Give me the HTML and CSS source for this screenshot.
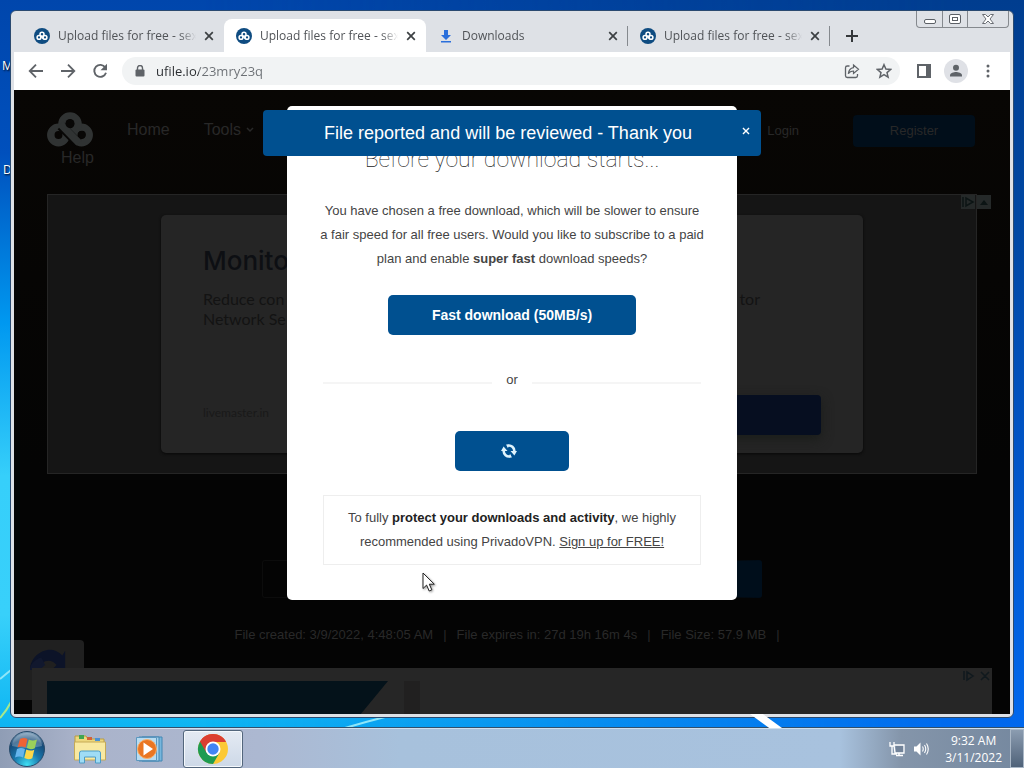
FILE: index.html
```html
<!DOCTYPE html>
<html lang="en">
<head>
<meta charset="utf-8">
<title>Upload files for free</title>
<link rel="stylesheet" href="styles.css">
</head>
<body>
<svg class="defs" aria-hidden="true">
  <symbol id="knot" viewBox="0 0 46 36">
    <g fill="none" stroke="currentColor" stroke-width="7.500">
      <circle cx="11.500" cy="23" r="7.700"/>
      <circle cx="34.500" cy="23" r="7.700"/>
      <circle cx="23" cy="12" r="8"/>
    </g>
    <path d="M14 14l17 17" stroke="#080706" stroke-width="9.500"/>
    <path d="M13.500 12l18.500 19" stroke="currentColor" stroke-width="7.500"/>
    <circle cx="23" cy="11.500" r="4.500" fill="#080706"/>
    <circle cx="35" cy="22.500" r="3.800" fill="#080706"/>
  </symbol>
  <symbol id="fav" viewBox="0 0 16 16">
    <circle cx="8" cy="8" r="8" fill="#0f4c81"/>
    <g fill="none" stroke="#fff" stroke-width="1.500">
      <circle cx="5" cy="9.400" r="1.900"/><circle cx="11" cy="9.400" r="1.900"/><circle cx="8" cy="6.200" r="2"/>
      <path d="M6.500 7.800l3 3"/>
    </g>
  </symbol>
  <symbol id="close" viewBox="0 0 10 10"><path d="M1.200 1.200l7.600 7.600M8.800 1.200L1.200 8.800" stroke="currentColor" stroke-width="1.700" fill="none"/></symbol>
</svg>
<div class="desktop">
  <svg class="streaks" viewBox="0 0 1024 768" preserveAspectRatio="none"><path d="M0 679q6-5 11-9M345 728q20-6 40-11" fill="none" stroke="#8fe6f8" stroke-width="2"/><path d="M0 718q7-8 11-16" fill="none" stroke="#a6e88c" stroke-width="2"/></svg>
  <span class="desk-label label-m">M</span>
  <span class="desk-label label-d">D</span>
  <div class="workspace">
    <section class="window">
      <div class="tabstrip">
        <div class="tab"><svg class="favicon"><use href="#fav"/></svg><button class="tab-title">Upload files for free - sex...</button><button class="tab-close" aria-label="Close tab"><svg><use href="#close"/></svg></button></div>
        <div class="tab active"><svg class="favicon"><use href="#fav"/></svg><button class="tab-title">Upload files for free - sex...</button><button class="tab-close" aria-label="Close tab"><svg><use href="#close"/></svg></button></div>
        <div class="tab divided"><svg class="favicon" viewBox="0 0 16 16"><path d="M6 2h4v5h3L8 12 3 7h3zM3 13h10v1.500H3z" fill="#2a6fdb"/></svg><button class="tab-title">Downloads</button><button class="tab-close" aria-label="Close tab"><svg><use href="#close"/></svg></button></div>
        <div class="tab divided"><svg class="favicon"><use href="#fav"/></svg><button class="tab-title">Upload files for free - sex...</button><button class="tab-close" aria-label="Close tab"><svg><use href="#close"/></svg></button></div>
        <button class="new-tab" aria-label="New tab"><svg viewBox="0 0 12 12"><path d="M6 0v12M0 6h12" stroke="#35383b" stroke-width="2"/></svg></button>
      </div>
      <div class="window-controls">
        <button aria-label="Minimize"><svg viewBox="0 0 12 12"><rect x=".5" y="6.500" width="11" height="4" rx="1.500" fill="#fff" stroke="#5c6066"/></svg></button>
        <button aria-label="Restore"><svg viewBox="0 0 12 12"><rect x=".5" y="1.500" width="11" height="9" rx="1.500" fill="#fff" stroke="#5c6066"/><rect x="3.500" y="4.500" width="5" height="3" fill="none" stroke="#5c6066"/></svg></button>
        <button class="wide" aria-label="Close"><svg viewBox="0 0 12 12"><path d="M.5 1.500h3L6 4l2.500-2.500h3L8 6l3.500 4.500h-3L6 8l-2.500 2.500h-3L4 6z" fill="#fff" stroke="#6a6e74"/></svg></button>
      </div>
      <div class="toolbar">
        <button class="tool" aria-label="Back"><svg viewBox="0 0 16 16"><path d="M15 8H2M8 1.700L1.700 8 8 14.300" fill="none" stroke="#5f6368" stroke-width="1.800"/></svg></button>
        <button class="tool" aria-label="Forward"><svg viewBox="0 0 16 16"><path d="M1 8h13M8 1.700L14.300 8 8 14.300" fill="none" stroke="#5f6368" stroke-width="1.800"/></svg></button>
        <button class="tool" aria-label="Reload"><svg viewBox="0 0 16 16"><path d="M13.300 4.500A6 6 0 1 0 14 9.800" fill="none" stroke="#5f6368" stroke-width="1.900"/><path d="M15 .8v6.500H8.500z" fill="#5f6368"/></svg></button>
        <div class="omnibox">
          <svg class="lock" viewBox="0 0 10 12"><path d="M2.500 5V3a2.500 2.500 0 0 1 5 0v2" fill="none" stroke="#5f6368" stroke-width="1.400"/><rect x="0.500" y="4.500" width="9" height="7" rx="1" fill="#5f6368"/></svg>
          <input class="url" type="text" aria-label="Address" value="ufile.io/23mry23q">
          <button class="tool" aria-label="Share"><svg viewBox="0 0 16 16"><path d="M5.500 3H3.300A1.800 1.800 0 0 0 1.500 4.800v7.900a1.800 1.800 0 0 0 1.800 1.800h8.400a1.800 1.800 0 0 0 1.800-1.800V11" fill="none" stroke="#5f6368" stroke-width="1.300"/><path d="M9.500 2l5 4.300-5 4.200V8C7 8 5.500 8.800 4.300 10.800 4.700 7.500 6.300 5 9.500 4.600z" fill="none" stroke="#5f6368" stroke-width="1.200"/></svg></button>
          <button class="tool" aria-label="Bookmark"><svg viewBox="0 0 16 16"><path d="M8 1.700l1.900 4.400 4.700.4-3.600 3.100 1.100 4.600L8 11.700l-4.100 2.500L5 9.600 1.400 6.500l4.700-.4z" fill="none" stroke="#5f6368" stroke-width="1.500"/></svg></button>
        </div>
        <button class="tool" aria-label="Side panel"><svg viewBox="0 0 16 16"><path d="M1 1h14v14H1zM3 3v10h7V3z" fill="#5f6368" fill-rule="evenodd"/></svg></button>
        <button class="tool avatar" aria-label="Profile"><svg viewBox="0 0 16 16"><circle cx="8" cy="4.800" r="3" fill="#5f6368"/><path d="M2 13.500v-1.300C2 10 6 9 8 9s6 1 6 3.200v1.300z" fill="#5f6368"/></svg></button>
        <button class="tool" aria-label="Menu"><svg viewBox="0 0 16 16"><g fill="#5f6368"><circle cx="8" cy="3" r="1.500"/><circle cx="8" cy="8" r="1.500"/><circle cx="8" cy="13" r="1.500"/></g></svg></button>
      </div>
      <main class="page">
        <header class="site-header">
          <nav class="site-nav">
            <svg class="logo"><use href="#knot"/></svg>
            <a href="#">Home</a>
            <a href="#">Tools <svg class="caret" viewBox="0 0 8 6"><path d="M1 1l3 3 3-3" fill="none" stroke="currentColor" stroke-width="1.500"/></svg></a>
            <a href="#">Help</a>
          </nav>
          <div class="account"><a class="login" href="#">Login</a><a class="register" href="#">Register</a></div>
        </header>
        <aside class="ad">
          <div class="ad-marks"><svg viewBox="0 0 14 14"><path d="M2 2v10M5 3v8l7-4z" fill="none" stroke="#0c1414" stroke-width="1.500"/></svg><svg viewBox="0 0 14 14"><path d="M3 10l4-5 4 5z" fill="#0c1414"/></svg></div>
          <div class="ad-card">
            <h2>Monito</h2>
            <div class="ad-copy"><p>Reduce con<br>Network Se</p><p>tor</p></div>
            <div class="ad-foot"><small>livemaster.in</small><span class="ad-cta"></span></div>
          </div>
        </aside>
        <div class="file-row"><span></span></div>
        <ul class="meta"><li>File created: 3/9/2022, 4:48:05 AM</li><li>File expires in: 27d 19h 16m 4s</li><li>File Size: 57.9 MB</li><li></li></ul>
        <div class="badge"><svg viewBox="0 0 40 40"><path d="M0 25C0 8 22-4 34 10l3-5v20H23l5-5C22 12 11 15 10 25z" fill="#0c1328"/><path d="M0 25h10l6-5-4-8C5 14 0 19 0 25z" fill="#11182e"/></svg></div>
        <aside class="bottom-ad">
          <svg class="slant" viewBox="0 0 343 34" preserveAspectRatio="none"><path d="M0 0h341L313 34H0z" fill="#04121a"/></svg>
          <span class="smudge"></span>
          <svg class="choices" viewBox="0 0 30 14"><path d="M2 2v9M5 3v8l6-4zM19 3l8 8M27 3l-8 8" fill="none" stroke="#10191e" stroke-width="1.500"/></svg>
        </aside>
        <section class="modal" role="dialog" aria-labelledby="modal-title">
          <h1 id="modal-title">Before your download starts...</h1>
          <p class="intro">You have chosen a free download, which will be slower to ensure<br>a fair speed for all free users. Would you like to subscribe to a paid<br>plan and enable <b>super fast</b> download speeds?</p>
          <button class="primary fast">Fast download (50MB/s)</button>
          <div class="or"><span>or</span></div>
          <button class="primary slow" aria-label="Loading"><svg viewBox="0 0 16 16"><g fill="none" stroke="#dff3fc" stroke-width="2.600"><path d="M6.500 2.700A5.500 5.500 0 0 1 13.300 8.500"/><path d="M9.500 13.300A5.500 5.500 0 0 1 2.700 7.500"/></g><path d="M9.500 8h6.500l-2.600 4.500zM6.500 8H0l2.600-4.500zM5 1.500l3 .2-1 3.500zM11 14.500l-3-.2 1-3.500z" fill="#dff3fc"/></svg></button>
          <p class="vpn">To fully <b>protect your downloads and activity</b>, we highly recommended using PrivadoVPN. <a href="#">Sign up for FREE!</a></p>
        </section>
        <div class="toast" role="alert"><p>File reported and will be reviewed - Thank you</p><button aria-label="Dismiss"><svg><use href="#close"/></svg></button></div>
      </main>
    </section>
  </div>
  <footer class="taskbar">
    <button class="task start" aria-label="Start"><svg viewBox="0 0 38 38"><defs><radialGradient id="orb" cx=".5" cy=".95" r=".95"><stop offset="0" stop-color="#3fe0f4"/><stop offset=".4" stop-color="#1978ad"/><stop offset=".75" stop-color="#164a78"/><stop offset="1" stop-color="#8ba9c2"/></radialGradient></defs><circle cx="19" cy="19" r="17.500" fill="url(#orb)" stroke="#274b6b"/><path d="M4 16a15 13 0 0 1 30 0Q19 20 4 16" fill="#fff" opacity=".25"/><path d="M12 9q4-2 7.500 0l-2 8.500q-4-2-8 0z" fill="#ee6335"/><path d="M20.800 9.500q4 2 8.200 0l-2.200 8.700q-4 2-8-.2z" fill="#9bd05a"/><path d="M9 19q4-2 8 0l-2 8.500q-3.500-2-8 0z" fill="#65b5ed"/><path d="M18.300 19.500q4 2 8 .2l-2 8.500q-4 2-8-.2z" fill="#fbd74a"/></svg></button>
    <button class="task" aria-label="Explorer"><svg viewBox="0 0 34 32"><path d="M2 3h11l2 3h16v20H2z" fill="#edd77d" stroke="#b99c43"/><path d="M6 2h5v4H6z" fill="#40a552"/><path d="M14 4h5v3h-5z" fill="#d36138"/><path d="M22 5h5v3h-5z" fill="#4a91d4"/><path d="M1.500 9h31v18h-31z" fill="#f8e9a1" stroke="#c5aa56"/><path d="M6.500 30V20q0-2 2-2h17q2 0 2 2v10h-5v-6h-11v6z" fill="#9fdcf5" stroke="#4c9cc6"/></svg></button>
    <button class="task" aria-label="Media player"><svg viewBox="0 0 34 32"><path d="M9 4h20v24H9z" fill="#77b6dc" stroke="#4387b4"/><path d="M6 4h20v24H6z" fill="#a7d3ec" stroke="#4387b4"/><path d="M3.500 4.500h20v23h-20z" fill="#b8dcf1" stroke="#5b97bf"/><circle cx="14" cy="16" r="9.500" fill="#ea7622" stroke="#f7b16e"/><path d="M10.500 9.500v13l9.500-6.500z" fill="#fff"/></svg></button>
    <button class="task running" aria-label="Chrome"><svg viewBox="0 0 32 32"><circle cx="16" cy="16" r="15" fill="#fcc934"/><path d="M16 16L3 8.500A15 15 0 0 1 29 8.500H16z" fill="#db3e31"/><path d="M3 8.500A15 15 0 0 0 16 31l6.500-11.300L16 16z" fill="#1e9b51"/><path d="M3 8.500l6.500 11.200L16 9h13A15 15 0 0 0 3 8.500" fill="#db3e31"/><circle cx="16" cy="16" r="7.500" fill="#fff"/><circle cx="16" cy="16" r="5.700" fill="#4285f4"/></svg></button>
    <div class="tray">
      <svg viewBox="0 0 16 16"><path d="M1 1v4h4V1M3 5v8h5M5 4h10v8H6z" fill="none" stroke="#fff" stroke-width="1.300"/><path d="M7 5h7v6H7z" fill="#728399"/><path d="M10 12v2M7 14.500h7" stroke="#fff" stroke-width="1.500"/></svg>
      <svg viewBox="0 0 16 16"><path d="M1 5.500h2.500L7.500 1.500v13l-4-4H1z" fill="#fff"/><path d="M9.500 5.500q1.500 2.500 0 5M11.500 4q2.500 4 0 8M13.500 2.500q3.500 5.500 0 11" fill="none" stroke="#fff" stroke-width="1.100"/></svg>
      <time class="clock">9:32 AM<br>3/11/2022</time>
      <button class="show-desktop" aria-label="Show desktop"></button>
    </div>
  </footer>
  <svg class="cursor" viewBox="0 0 14 20"><path d="M1 1v15.500l3.600-3.400 2.600 5.900 2.600-1.200-2.500-5.600h5z" fill="#fff" stroke="#222"/></svg>
</div>
</body>
</html>
```

FILE: styles.css
```css
* { box-sizing: border-box; }
body { margin: 0; font-family: "Liberation Sans", Arial, sans-serif; font-size: 13px; }
button, input { font: inherit; color: inherit; border: 0; padding: 0; margin: 0; background: none; }
p, h1, h2, ul { margin: 0; padding: 0; }
svg { display: block; flex: none; }
.defs { position: absolute; width: 0; height: 0; }

.desktop {
  position: relative; display: flex; flex-direction: column; height: 100vh; overflow: hidden;
  background: linear-gradient(#0046ac 0%, #0050bd 20%, #0098f0 42%, #36cffa 62%, #38d0fa 80%, #0cb4f2 95%);
}
.desktop::before {
  content: ""; position: absolute; inset: 0;
  background: linear-gradient(#003d8f 0%, #0048a4 30%, #0055c8 60%, #0068ee 95%);
  mask-image: linear-gradient(to right, transparent 20%, #000 95%);
}
.desktop::after {
  content: ""; position: absolute; left: 750px; bottom: 40px; width: 32px; height: 14px;
  background: #fff; clip-path: polygon(0 0, 40% 0, 100% 100%, 60% 100%);
}
.streaks { position: absolute; inset: 0; width: 100%; height: 100%; }
.desk-label { position: absolute; color: #fff; font: 12px/16px "Open Sans", sans-serif; text-shadow: 1px 1px 2px #000; }
.label-m { left: 2px; top: 58px; }
.label-d { left: 3px; top: 162px; }

.workspace { position: relative; flex: 1; min-height: 0; display: flex; padding: 10px; }
.window {
  position: relative; flex: 1; min-width: 0; display: flex; flex-direction: column;
  border: 1px solid #2a4a70; border-radius: 6px; background: #dee1e6; padding: 0 3px 3px;
}
.tabstrip { display: flex; align-items: stretch; height: 41px; padding: 8px 100px 0 8px; font: 12px/16px "Open Sans", sans-serif; color: #505357; }
.tab { position: relative; flex: 0 1 202px; min-width: 0; display: flex; align-items: center; gap: 8px; padding: 0 10px 0 12px; border-radius: 8px 8px 0 0; }
.tab.active { background: #fff; }
.tab.divided::after { content: ""; position: absolute; right: 0; top: 7px; height: 20px; width: 1px; background: #85898e; }
.favicon { width: 16px; height: 16px; }
.tab-title { flex: 1; min-width: 0; overflow: hidden; white-space: nowrap; text-align: left; mask-image: linear-gradient(to right, #000 88%, transparent); }
.tab-close { color: #3c4043; }
.tab-close svg { width: 10px; height: 10px; }
.new-tab { padding: 0 16px; }
.new-tab svg { width: 12px; height: 12px; }
.window-controls { position: absolute; right: 4px; top: 0; display: flex; border: 1px solid #85898e; border-top: 0; border-radius: 0 0 4px 4px; }
.window-controls button { display: grid; place-items: center; width: 25px; height: 16px; }
.window-controls button + button { border-left: 1px solid #85898e; }
.window-controls .wide { width: 41px; }
.window-controls svg { width: 12px; height: 12px; }

.toolbar { display: flex; align-items: center; gap: 8px; height: 38px; padding: 0 10px; background: #fff; }
.tool { display: grid; place-items: center; width: 24px; height: 24px; }
.tool svg { width: 16px; height: 16px; }
.omnibox { flex: 1; min-width: 0; display: flex; align-items: center; gap: 8px; height: 28px; margin: 0 4px 0 2px; padding: 0 4px 0 12px; border-radius: 14px; background: #f1f3f4; }
.lock { width: 12px; height: 12px; }
.url {
  flex: 1; min-width: 0; padding-left: 2px; font: 13px/20px "Open Sans", sans-serif; color: transparent;
  background: linear-gradient(to right, #292c30 45px, #6b6f74 45px); background-clip: text;
}
.avatar { border-radius: 50%; background: #dfe1e6; }

.page { position: relative; flex: 1; min-height: 0; display: flex; flex-direction: column; overflow: hidden; background: linear-gradient(#080604, #040404 60%); }
.site-header { display: flex; justify-content: space-between; align-items: flex-start; padding: 22px 33px 26px; color: #282828; }
.site-header a { color: inherit; text-decoration: none; }
.site-nav { display: flex; flex-wrap: wrap; align-items: center; column-gap: 6px; width: 230px; font-size: 16px; line-height: 20px; }
.site-nav a { display: flex; align-items: center; gap: 5px; padding: 0 14px; }
.logo { width: 46px; height: 36px; margin-right: 14px; color: #303333; }
.caret { width: 8px; height: 6px; }
.account { display: flex; align-items: center; gap: 54px; padding: 3px 2px 0 0; line-height: 32px; }
.register { width: 122px; text-align: center; background: #010e1a; border-radius: 4px; }

.ad { position: relative; margin: 0 33px; padding: 20px 113px; background: #151515; border: 1px solid #252525; }
.ad-marks { position: absolute; top: 0; right: -15px; display: flex; gap: 2px; }
.ad-marks svg { width: 14px; height: 14px; background: #252929; }
.ad-card { padding: 26px 42px 18px; border-radius: 5px; background: #252525; color: #131313; box-shadow: 0 1px 3px #080808; font-family: Lato, sans-serif; }
.ad-card h2 { font: 500 26px/40px Inter, sans-serif; color: #0d0f13; }
.ad-copy { display: flex; justify-content: space-between; padding: 8px 61px 0 0; font-size: 16px; line-height: 20px; }
.ad-foot { display: flex; justify-content: space-between; align-items: flex-start; margin-top: 66px; }
.ad-foot small { padding-top: 10px; font-size: 12px; line-height: 16px; color: #191919; }
.ad-cta { width: 180px; height: 40px; border-radius: 4px; background: #060e20; box-shadow: 0 4px 12px #1a1d1a; }
.file-row { display: flex; justify-content: center; margin-top: 86px; }
.file-row span { width: 500px; height: 38px; border: 1px solid #0c0c0c; border-right: 40px solid #000e1b; border-radius: 3px; }
.meta { display: flex; justify-content: center; margin-top: 27px; list-style: none; line-height: 20px; color: #292929; white-space: nowrap; }
.meta li + li::before { content: "|"; padding: 0 10px; }
.badge { position: absolute; left: 0; bottom: 14px; width: 70px; height: 60px; padding: 6px 16px; border-radius: 0 4px 0 0; background: #202020; }
.badge svg { width: 38px; height: 38px; }
.bottom-ad { position: relative; flex: 1; display: flex; align-items: flex-start; margin: 23px 18px 0; padding: 13px 0 0 15px; background: #262626; }
.slant { width: 343px; height: 34px; }
.smudge { width: 16px; height: 34px; margin-left: 14px; background: #212020; }
.choices { position: absolute; right: 0; top: 1px; width: 30px; height: 14px; }

.modal {
  position: absolute; top: 16px; left: 50%; transform: translateX(-50%); width: 450px; max-width: 100%;
  display: flex; flex-direction: column; align-items: center; padding: 38px 36px 35px;
  border-radius: 5px; background: #fff; color: #444; text-align: center; line-height: 24px;
}
.modal h1 { font: 100 23px/32px Roboto, sans-serif; color: #222; }
.intro { margin: 23px -12px 0; }
.primary { display: grid; place-items: center; height: 40px; border-radius: 5px; background: #005090; color: #fff; font-size: 14px; font-weight: bold; }
.fast { width: 248px; margin-top: 24px; }
.or { align-self: stretch; display: flex; align-items: center; gap: 14px; margin-top: 35px; line-height: 20px; }
.or span { padding-bottom: 6px; }
.or::before, .or::after { content: ""; flex: 1; height: 2px; background: #f5f5f5; }
.slow { width: 114px; margin-top: 35px; padding-right: 7px; }
.slow svg { width: 16px; height: 16px; }
.vpn { align-self: stretch; margin-top: 24px; padding: 10px 20px; border: 1px solid #eee; }
.vpn b { color: #222; }
.vpn a { color: inherit; }
.toast {
  position: absolute; top: 20px; left: 50%; transform: translateX(-50%); width: 498px; max-width: 100%;
  display: flex; align-items: center; height: 46px; padding-right: 11px;
  border-radius: 4px; background: #005090; color: #fff; text-align: center; font-size: 18px;
}
.toast p { flex: 1; padding-left: 11px; }
.toast button svg { width: 8px; height: 8px; }
.toast button { margin-bottom: 4px; }

.taskbar {
  position: relative; display: flex; align-items: center; height: 40px; border-top: 1px solid #cfe0ef; box-shadow: 0 -1px #31506c;
  background: linear-gradient(to right, #8f9db5 0, #aab3ca 80px, #acb8d1 260px, #a7c1dc 400px, #a8c2de 82%, #8495aa 88%, #75889f);
}
.task { display: grid; place-items: center; width: 60px; height: 38px; }
.task svg { width: 34px; height: 32px; }
.start { width: 54px; margin-right: 6px; }
.start svg { width: 38px; height: 38px; }
.running { margin-left: 3px; border: 1px solid #53667c; border-radius: 3px; background: linear-gradient(#e4eaf3, #cdd8e7); box-shadow: inset 0 0 0 1px #f4f8fc; }
.tray { display: flex; align-items: center; gap: 8px; height: 100%; margin-left: auto; color: #fff; font: 12px/17px "Open Sans", sans-serif; text-align: center; }
.tray svg { width: 16px; height: 16px; }
.clock { margin-left: 8px; }
.show-desktop { width: 14px; height: 100%; border: 1px solid #a9b7c6; background: linear-gradient(#8b9cb0, #4f6279); }
.cursor { position: absolute; left: 422px; top: 572px; width: 14px; height: 20px; filter: drop-shadow(1px 1px 1px #999); }
```
